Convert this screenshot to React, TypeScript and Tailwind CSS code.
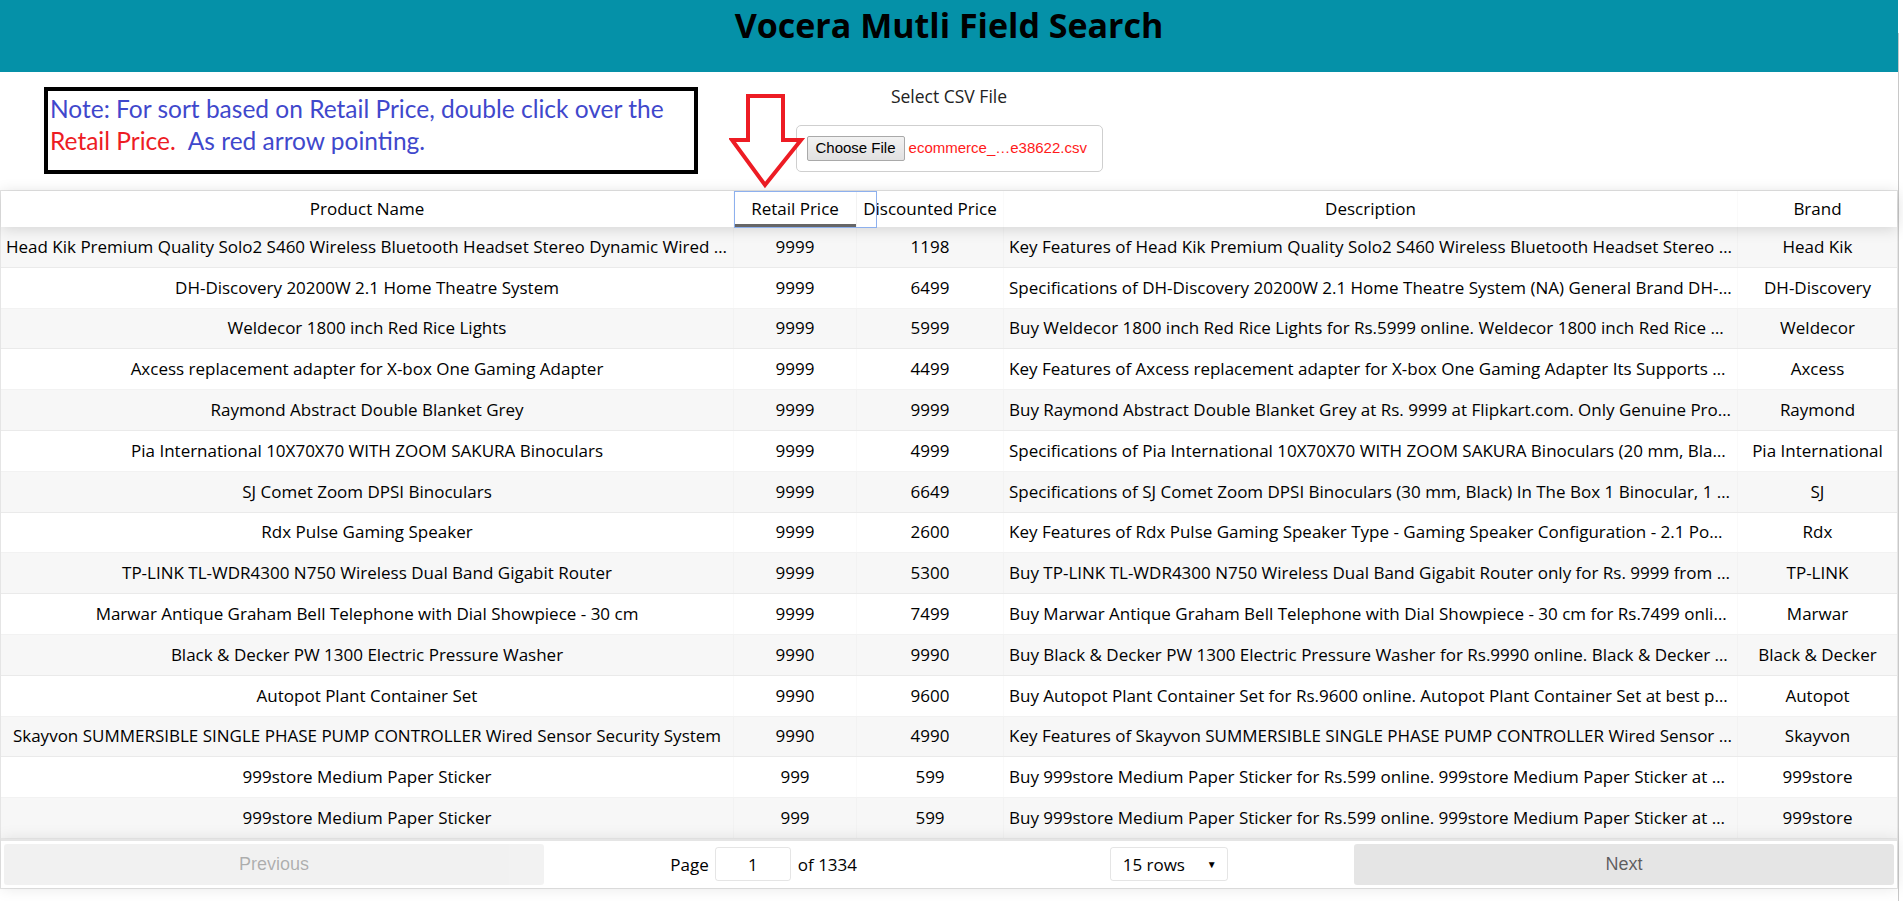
import React from "react";

type Row = { name: string; retail: string; disc: string; desc: string; brand: string };

const rows: Row[] = [
  {
    name: "Head Kik Premium Quality Solo2 S460 Wireless Bluetooth Headset Stereo Dynamic Wired Headset Music Sport Handsfree",
    retail: "9999",
    disc: "1198",
    desc: "Key Features of Head Kik Premium Quality Solo2 S460 Wireless Bluetooth Headset Stereo Dynamic Wired Headset",
    brand: "Head Kik",
  },
  {
    name: "DH-Discovery 20200W 2.1 Home Theatre System",
    retail: "9999",
    disc: "6499",
    desc: "Specifications of DH-Discovery 20200W 2.1 Home Theatre System (NA) General Brand DH-Discovery Model",
    brand: "DH-Discovery",
  },
  {
    name: "Weldecor 1800 inch Red Rice Lights",
    retail: "9999",
    disc: "5999",
    desc: "Buy Weldecor 1800 inch Red Rice Lights for Rs.5999 online. Weldecor 1800 inch Red Rice Lights at best prices",
    brand: "Weldecor",
  },
  {
    name: "Axcess replacement adapter for X-box One Gaming Adapter",
    retail: "9999",
    disc: "4499",
    desc: "Key Features of Axcess replacement adapter for X-box One Gaming Adapter Its Supports Xbox One Kinect Sensor",
    brand: "Axcess",
  },
  {
    name: "Raymond Abstract Double Blanket Grey",
    retail: "9999",
    disc: "9999",
    desc: "Buy Raymond Abstract Double Blanket Grey at Rs. 9999 at Flipkart.com. Only Genuine Products. Free Shipping",
    brand: "Raymond",
  },
  {
    name: "Pia International 10X70X70 WITH ZOOM SAKURA Binoculars",
    retail: "9999",
    disc: "4999",
    desc: "Specifications of Pia International 10X70X70 WITH ZOOM SAKURA Binoculars (20 mm, Black) In The Box",
    brand: "Pia International",
  },
  {
    name: "SJ Comet Zoom DPSI Binoculars",
    retail: "9999",
    disc: "6649",
    desc: "Specifications of SJ Comet Zoom DPSI Binoculars (30 mm, Black) In The Box 1 Binocular, 1 Pouch",
    brand: "SJ",
  },
  {
    name: "Rdx Pulse Gaming Speaker",
    retail: "9999",
    disc: "2600",
    desc: "Key Features of Rdx Pulse Gaming Speaker Type - Gaming Speaker Configuration - 2.1 Power Output",
    brand: "Rdx",
  },
  {
    name: "TP-LINK TL-WDR4300 N750 Wireless Dual Band Gigabit Router",
    retail: "9999",
    disc: "5300",
    desc: "Buy TP-LINK TL-WDR4300 N750 Wireless Dual Band Gigabit Router only for Rs. 9999 from Flipkart.com",
    brand: "TP-LINK",
  },
  {
    name: "Marwar Antique Graham Bell Telephone with Dial Showpiece - 30 cm",
    retail: "9999",
    disc: "7499",
    desc: "Buy Marwar Antique Graham Bell Telephone with Dial Showpiece - 30 cm for Rs.7499 online. Marwar",
    brand: "Marwar",
  },
  {
    name: "Black & Decker PW 1300 Electric Pressure Washer",
    retail: "9990",
    disc: "9990",
    desc: "Buy Black & Decker PW 1300 Electric Pressure Washer for Rs.9990 online. Black & Decker PW 1300",
    brand: "Black & Decker",
  },
  {
    name: "Autopot Plant Container Set",
    retail: "9990",
    disc: "9600",
    desc: "Buy Autopot Plant Container Set for Rs.9600 online. Autopot Plant Container Set at best prices with FREE",
    brand: "Autopot",
  },
  {
    name: "Skayvon SUMMERSIBLE SINGLE PHASE PUMP CONTROLLER Wired Sensor Security System",
    retail: "9990",
    disc: "4990",
    desc: "Key Features of Skayvon SUMMERSIBLE SINGLE PHASE PUMP CONTROLLER Wired Sensor Security System",
    brand: "Skayvon",
  },
  {
    name: "999store Medium Paper Sticker",
    retail: "999",
    disc: "599",
    desc: "Buy 999store Medium Paper Sticker for Rs.599 online. 999store Medium Paper Sticker at best prices",
    brand: "999store",
  },
  {
    name: "999store Medium Paper Sticker",
    retail: "999",
    disc: "599",
    desc: "Buy 999store Medium Paper Sticker for Rs.599 online. 999store Medium Paper Sticker at best prices",
    brand: "999store",
  },
];

function Cell({ w, children, last }: { w: string; children: React.ReactNode; last?: boolean }) {
  return (
    <div
      className={`${w} shrink-0 flex items-center justify-center px-[5px] overflow-hidden ${
        last ? "" : "border-r border-black/[0.02]"
      }`}
    >
      <span className="block w-full truncate text-center leading-[24px]">{children}</span>
    </div>
  );
}

export default function App() {
  return (
    <div className="flex w-[1903px] min-h-[901px] bg-white font-['Open_Sans',sans-serif] text-black">
      <div className="w-[1898px] shrink-0">
        <header className="h-[72px] bg-[#0591a8] text-center">
          <h1 className="pt-[3px] text-[34px] font-bold leading-[44px]">Vocera Mutli Field Search</h1>
        </header>

        <section className="relative h-[118px] flex flex-col items-center">
          <div className="absolute left-[44px] top-[15px] w-[654px] h-[87px] border-[4px] border-black pl-[2px] pt-[2px] font-['Lato',sans-serif] text-[24.5px] leading-[32px] text-[#3f48cc]">
            <div>Note: For sort based on Retail Price, double click over the</div>
            <div>
              <span className="text-[#ed1c24]">Retail Price.</span>
              <span className="ml-[12px]">As red arrow pointing.</span>
            </div>
          </div>

          <svg
            className="absolute left-[729px] top-[21px]"
            width="78"
            height="97"
            viewBox="0 0 78 97"
          >
            <polygon
              points="19,3 54,3 54,47 72,47 36,92 3,47 19,47"
              fill="none"
              stroke="#ed1c24"
              strokeWidth="4"
              strokeLinejoin="miter"
            />
          </svg>

          <p className="mt-[12px] text-[17.5px] leading-[24px] text-[#222]">Select CSV File</p>
          <div className="mt-[17px] h-[47px] w-[307px] rounded-[5px] border border-[#cfcfcf] flex items-center pl-[10px] font-['Liberation_Sans',sans-serif] text-[15px]">
            <div className="h-[25px] px-[8px] flex items-center border border-[#a9a9a9] rounded-[2px] bg-gradient-to-b from-[#f2f2f2] to-[#e1e1e1] text-black">
              Choose File
            </div>
            <span className="ml-[4px] text-[#ff1a1a]">ecommerce_…e38622.csv</span>
          </div>
        </section>

        <div className="border border-black/10 flex flex-col">
          {/* header */}
          <div className="relative z-10 flex h-[36px] bg-white shadow-[0_2px_15px_0_rgba(0,0,0,0.15)] text-[17px]">
            <Cell w="w-[733px]">Product Name</Cell>
            <div className="w-[123px] shrink-0 flex items-center justify-center border-r border-black/[0.05] shadow-[inset_0_-3px_0_0_rgba(0,0,0,0.6)] whitespace-nowrap">
              Retail Price
            </div>
            <Cell w="w-[147px]">Discounted Price</Cell>
            <Cell w="w-[734px]">Description</Cell>
            <Cell w="flex-1" last>
              Brand
            </Cell>
            <div className="absolute left-[733px] top-0 w-[143px] h-[37px] border border-[#8db0ee] pointer-events-none" />
          </div>

          {/* body */}
          <div className="flex flex-col text-[17px]">
            {rows.map((r, i) => (
              <div
                key={i}
                className={`flex h-[40.8px] border-b border-black/[0.05] ${
                  i % 2 === 0 ? "bg-black/[0.03]" : "bg-white"
                }`}
              >
                <Cell w="w-[733px]">{r.name}</Cell>
                <Cell w="w-[123px]">{r.retail}</Cell>
                <Cell w="w-[147px]">{r.disc}</Cell>
                <Cell w="w-[734px]">{r.desc}</Cell>
                <Cell w="flex-1" last>
                  {r.brand}
                </Cell>
              </div>
            ))}
          </div>

          {/* pagination */}
          <div className="relative z-10 flex items-stretch p-[3px] border-t-2 border-black/10 bg-white shadow-[0_0_15px_0_rgba(0,0,0,0.1)]">
            <div className="flex-1">
              <div className="h-[41px] w-full rounded-[3px] bg-black/10 opacity-50 flex items-center justify-center font-['Liberation_Sans',sans-serif] text-[18px] text-black/60">
                Previous
              </div>
            </div>
            <div className="flex-[1.5] flex items-center justify-around text-[17px]">
              <div className="flex items-center whitespace-nowrap">
                <span>Page</span>
                <div className="ml-[6px] w-[76px] h-[34px] rounded-[3px] border border-black/10 flex items-center justify-center">
                  1
                </div>
                <span className="ml-[7px]">of 1334</span>
              </div>
              <div className="w-[118px] h-[34px] rounded-[3px] border border-black/10 flex items-center pl-[12px] pr-[10px]">
                <span>15 rows</span>
                <span className="ml-auto text-[10px]">▼</span>
              </div>
            </div>
            <div className="flex-1">
              <div className="h-[41px] w-full rounded-[3px] bg-black/10 flex items-center justify-center font-['Liberation_Sans',sans-serif] text-[18px] text-black/60">
                Next
              </div>
            </div>
          </div>
        </div>
      </div>
      <div className="w-[5px] pt-[33px]">
        <div className="h-[868px] border-l border-[#c8c8c8]" />
      </div>
    </div>
  );
}
